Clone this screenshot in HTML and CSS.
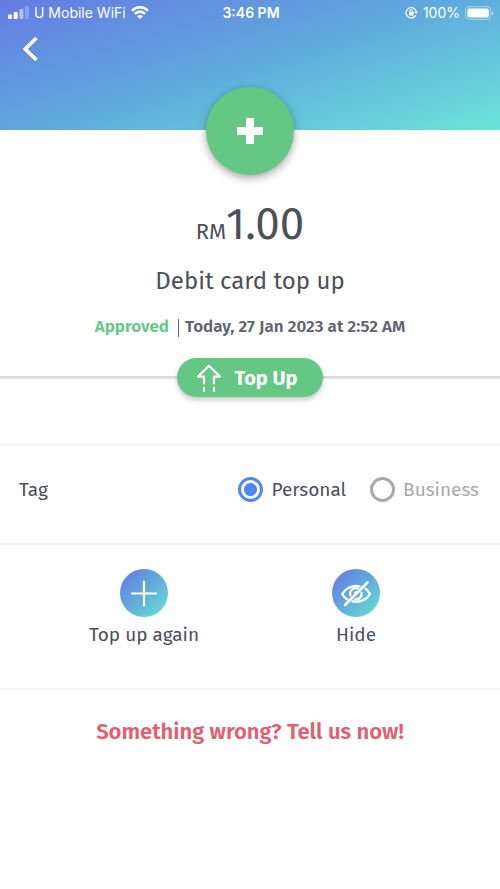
FILE: index.html
```html
<!DOCTYPE html>
<html lang="en">
<head>
  <meta charset="utf-8">
  <meta name="viewport" content="width=device-width, initial-scale=1">
  <title>Transaction details</title>
  <link rel="stylesheet" href="styles.css">
</head>
<body>
  <header class="header">
    <div class="status">
      <div class="status-left">
        <svg class="signal" viewBox="0 0 21 13" aria-hidden="true">
          <rect x="0" y="8.500" width="4" height="4.500" rx="1"/>
          <rect x="5.700" y="6" width="4" height="7" rx="1"/>
          <rect x="11.400" y="3" width="4" height="10" rx="1" opacity=".5"/>
          <rect x="17" y="0" width="4" height="13" rx="1" opacity=".25"/>
        </svg>
        <span>U Mobile WiFi</span>
        <svg class="wifi" viewBox="0 0 18 13" aria-hidden="true">
          <path d="M1 4.600Q9-2.200 17 4.600" fill="none" stroke="#fff" stroke-width="2.700"/>
          <path d="M3.800 7.900Q9 3.400 14.200 7.900" fill="none" stroke="#fff" stroke-width="2.500"/>
          <path d="M6.100 10.200Q9 7.600 11.900 10.200L9 13Z"/>
        </svg>
      </div>
      <span class="clock">3:46 PM</span>
      <div class="status-right">
        <svg class="lock" viewBox="0 0 13 13" aria-hidden="true">
          <path d="M10.800 9.200A5.200 5.200 0 1 1 11.300 5.600" fill="none" stroke="#fff" stroke-width="1.200"/>
          <path d="M9.200 5.600H13L11.200 8Z"/>
          <rect x="4" y="5.800" width="4.600" height="3.600" rx=".5"/>
          <path d="M4.900 6V4.800a1.400 1.400 0 0 1 2.800 0V6" fill="none" stroke="#fff"/>
        </svg>
        <span>100%</span>
        <svg class="battery" viewBox="0 0 29 14" aria-hidden="true">
          <rect x=".6" y=".6" width="25" height="12.800" rx="3.600" fill="none" stroke="#fff" stroke-width="1.200" opacity=".4"/>
          <rect x="2.400" y="2.600" width="21.400" height="8.800" rx="1.800"/>
          <path d="M27 5v4q1.600-.6 1.600-2T27 5Z" opacity=".5"/>
        </svg>
      </div>
    </div>
    <button class="back" type="button" aria-label="Back">
      <svg viewBox="0 0 16 26" aria-hidden="true"><path d="M14.500 2 3.200 13l11.300 11" fill="none" stroke="#fff" stroke-width="3.600"/></svg>
    </button>
  </header>

  <main>
    <section class="summary">
      <div class="badge">
        <svg viewBox="0 0 26 26" aria-hidden="true"><path d="M9 0h8v9h9v8h-9v9H9v-9H0V9h9Z"/></svg>
      </div>
      <p class="amount"><span class="currency">RM</span>1.00</p>
      <h1 class="title">Debit card top up</h1>
      <p class="meta"><span class="state">Approved</span><span class="date">Today, 27 Jan 2023 at 2:52 AM</span></p>
      <div class="pill">
        <svg viewBox="0 0 26 28" aria-hidden="true">
          <path d="M8 19.500V12.600H2L13 1.800l11 10.800h-6v6.900M8 23.800v3M18 23.800v3" fill="none" stroke="#fff" stroke-width="2.200" stroke-linecap="round" stroke-linejoin="round"/>
        </svg>
        <span>Top Up</span>
      </div>
    </section>

    <div class="tags" role="radiogroup" aria-labelledby="tag-name">
      <span class="tag-name" id="tag-name">Tag</span>
      <label class="option"><input type="radio" name="tag" value="personal" checked><span>Personal</span></label>
      <label class="option"><input type="radio" name="tag" value="business"><span>Business</span></label>
    </div>

    <section class="actions">
      <button class="action" type="button">
        <svg viewBox="0 0 48 48" aria-hidden="true">
          <defs><linearGradient id="blend" x1="0" y1="0" x2="1" y2="1"><stop offset=".1" stop-color="#617fe2"/><stop offset=".9" stop-color="#65d8d5"/></linearGradient></defs>
          <circle cx="24" cy="24" r="24" fill="url(#blend)"/>
          <path d="M12 24.500h24M24 12.500v24" stroke="#fff" stroke-width="2.200" stroke-linecap="round"/>
        </svg>
        <span>Top up again</span>
      </button>
      <button class="action" type="button">
        <svg viewBox="0 0 48 48" aria-hidden="true">
          <circle cx="24" cy="24" r="24" fill="url(#blend)"/>
          <g fill="none" stroke="#fff" stroke-width="2.400" stroke-linecap="round">
            <path d="M27.500 17.400C20 15.800 13.500 19.500 10.200 25c1.300 2.300 3 4 5 5.300M33.500 19.700c1.900 1.200 3.300 3 4.500 5.300-3.300 5.800-10 9-17.300 7.300"/>
            <path d="M25.500 19.300a5.800 5.800 0 0 0-7.200 7M29.600 23.800a5.800 5.800 0 0 1-6.300 6.600"/>
            <path d="M13 36 35.500 13.500" stroke-width="2.600"/>
            <path d="M24.500 22.900a2 2 0 0 0-2 2" stroke-width="1.600"/>
          </g>
        </svg>
        <span>Hide</span>
      </button>
    </section>

    <p class="help"><a href="#help">Something wrong? Tell us now!</a></p>
  </main>
</body>
</html>
```
FILE: styles.css
```css
* {
  box-sizing: border-box;
}

body {
  margin: 0;
  background: #fff;
  color: #4c5059;
  font-family: "Fira Sans", "Noto Sans", sans-serif;
  font-size: 19px;
  line-height: 24px;
}

svg {
  display: block;
  fill: #fff;
}

p,
h1 {
  margin: 0;
}

button {
  padding: 0;
  border: 0;
  background: none;
  color: inherit;
  font: inherit;
}

.header {
  height: 130px;
  background: linear-gradient(163deg, #657be2 0%, #5fa8dd 48%, #6ae4d8 100%);
}

.status {
  display: grid;
  grid-template-columns: 1fr auto 1fr;
  align-items: center;
  height: 25px;
  padding: 0 6px 0 8px;
  color: #fff;
  font-family: Inter, sans-serif;
  font-size: 14px;
}

.status-left,
.status-right {
  display: flex;
  align-items: center;
  gap: 5px;
}

.status-right {
  justify-content: flex-end;
}

.clock {
  font-weight: 600;
}

.signal {
  width: 21px;
  height: 13px;
}

.wifi {
  width: 18px;
  height: 13px;
}

.lock {
  width: 13px;
  height: 13px;
}

.battery {
  width: 29px;
  height: 14px;
}

.back {
  display: block;
  margin: 11px 22px;
}

.back svg {
  width: 16px;
  height: 26px;
}

.summary {
  position: relative;
  display: flex;
  flex-direction: column;
  align-items: center;
  padding-bottom: 37px;
  border-bottom: 2px solid #dadada;
  box-shadow: 0 1px 1px #e8e8e8;
}

.badge {
  display: grid;
  place-items: center;
  width: 88px;
  height: 88px;
  margin-top: -43px;
  border-radius: 50%;
  background: #64c884;
  box-shadow: 0 3px 8px rgba(0, 0, 0, .35);
}

.badge svg {
  width: 26px;
  height: 26px;
}

.amount {
  margin-top: 24px;
  font-size: 44px;
  line-height: 52px;
}

.currency {
  font-size: 22px;
}

.title {
  margin-top: 6px;
  font-size: 24px;
  font-weight: 400;
  line-height: 34px;
}

.meta {
  display: flex;
  align-items: center;
  margin-top: 17px;
  color: #62656d;
  font-size: 17px;
  font-weight: 600;
  line-height: 24px;
}

.state {
  color: #64c884;
}

.date::before {
  content: "";
  display: inline-block;
  width: 1px;
  height: 18px;
  margin: 0 6px 0 9px;
  background: #62656d;
  vertical-align: middle;
}

.pill {
  position: absolute;
  bottom: -21px;
  left: 50%;
  display: flex;
  align-items: center;
  justify-content: center;
  gap: 12px;
  width: 146px;
  height: 39px;
  padding-right: 6px;
  transform: translateX(-50%);
  border-radius: 20px;
  background: #64c884;
  box-shadow: 0 3px 5px rgba(0, 0, 0, .22);
  color: #fff;
  font-size: 20px;
  font-weight: 700;
}

.pill svg {
  width: 26px;
  height: 28px;
}

.tags {
  display: flex;
  align-items: center;
  height: 101px;
  margin-top: 66px;
  padding: 0 21px 10px 19px;
  border: solid #f5f5f5;
  border-width: 2px 0;
}

.tag-name {
  margin-right: auto;
}

.option {
  display: flex;
  align-items: center;
  gap: 8px;
  margin-left: 24px;
  color: #a8a9ad;
}

.option:has(:checked) {
  color: #4c5059;
}

.option input {
  appearance: none;
  width: 25px;
  height: 25px;
  margin: 0;
  border: 3px solid #a8a9ad;
  border-radius: 50%;
}

.option input:checked {
  border-color: #4e86f7;
  background: radial-gradient(circle, #4e86f7 6px, transparent 7px);
}

.actions {
  display: grid;
  grid-template-columns: 1fr 1fr;
  padding: 24px 38px 41px;
  border-bottom: 2px solid #f5f5f5;
}

.action {
  display: flex;
  flex-direction: column;
  align-items: center;
  gap: 6px;
}

.action svg {
  width: 48px;
  height: 48px;
}

.help {
  margin-top: 30px;
  font-size: 22px;
  font-weight: 600;
  text-align: center;
}

.help a {
  color: #e25f6f;
  text-decoration: none;
}
```
